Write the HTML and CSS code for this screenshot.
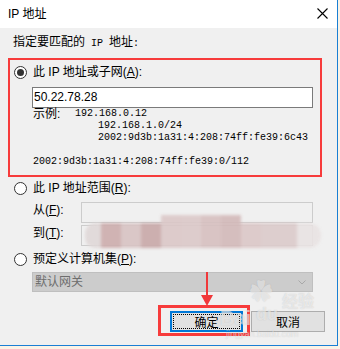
FILE: index.html
```html
<!DOCTYPE html>
<html lang="zh-CN">

<head>
    <meta charset="UTF-8">
    <meta name="viewport" content="width=device-width, initial-scale=1.0">
    <title>IP 地址</title>
    <!-- css -->
    <link rel="stylesheet" href="styles.css">
</head>

<body>
    <div class="dialog">
        <div class="titlebar">
            <span class="title">IP 地址</span>
            <svg class="close" width="11" height="11" viewBox="0 0 11 11">
                <path d="M0.5 0.5 L10.5 10.5 M10.5 0.5 L0.5 10.5" stroke="#000" stroke-width="1.1" fill="none" />
            </svg>
        </div>

        <div class="content">
            <p class="prompt">指定要匹配的<span class="mono"> IP </span>地址<span class="mono">:</span></p>

            <!-- first choice, marked in red -->
            <div class="group marked">
                <div class="option"><span class="radio checked"></span><span>此 IP 地址或子网(<u>A</u>):</span></div>
                <div class="textbox">50.22.78.28</div>
                <div class="examples">
                    <div class="ex-row"><span class="ex-label">示例:</span><span class="mono">192.168.0.12</span></div>
                    <div class="ex-row indent mono">192.168.1.0/24</div>
                    <div class="ex-row indent mono">2002:9d3b:1a31:4:208:74ff:fe39:6c43</div>
                    <div class="ex-row"></div>
                    <div class="ex-row mono">2002:9d3b:1a31:4:208:74ff:fe39:0/112</div>
                </div>
            </div>

            <div class="group">
                <div class="option"><span class="radio"></span><span>此 IP 地址范围(<u>R</u>):</span></div>
                <div class="range-row first">
                    <span class="range-label">从(<u>F</u>):</span>
                    <div class="box"></div>
                </div>
                <div class="range-row">
                    <span class="range-label">到(<u>T</u>):</span>
                    <div class="box"></div>
                    <div class="smudge">
                        <span class="blk b1"></span><span class="blk b2"></span><span class="blk b3"></span>
                        <span class="blk b4"></span><span class="blk b5"></span><span class="blk b6"></span>
                        <span class="blk b7"></span><span class="blk b8"></span><span class="blk b9"></span>
                        <span class="blk b10"></span><span class="blk b11"></span>
                    </div>
                </div>
            </div>

            <div class="group">
                <div class="option"><span class="radio"></span><span>预定义计算机集(<u>P</u>):</span></div>
                <div class="select">
                    <span>默认网关</span>
                    <svg width="8" height="5" viewBox="0 0 8 5">
                        <path d="M0.5 0.5 L4 4 L7.5 0.5" stroke="#a8a8a8" stroke-width="1" fill="none" />
                    </svg>
                </div>
            </div>

            <div class="buttons">
                <div class="btn-wrap">
                    <button class="btn primary"><span class="focus">确定</span></button>
                    <div class="highlight"></div>
                    <svg class="arrow" width="14" height="36" viewBox="0 0 14 36">
                        <rect x="6" y="0" width="2" height="26" fill="#f0383a" />
                        <polygon points="1,23 13,23 7,34" fill="#f0383a" />
                    </svg>
                </div>
                <button class="btn">取消</button>
            </div>
        </div>

        <div class="watermark">
            <span class="wm-bai">Bai</span><span class="wm-paw">&#10047;</span><span class="wm-du">du</span><span class="wm-jy">经验</span>
            <span class="wm-url">jingyan.baidu.com</span>
        </div>
    </div>
</body>

</html>
```

FILE: styles.css
```css
body {
    margin: 0;
    background: #fbf3e6;
    font-family: "Liberation Sans", "Noto Sans CJK SC", sans-serif;
    font-size: 12px;
    color: #000;
}

.dialog {
    position: relative;
    width: 337px;
    height: 345px;
    background: #f0f0f0;
    border-right: 1px solid #1a7fd4;
    border-bottom: 1px solid #1a7fd4;
    overflow: hidden;
}

.titlebar {
    display: flex;
    align-items: center;
    justify-content: space-between;
    height: 28px;
    padding: 0 9px 0 8px;
    background: #fff;
}

.title {
    line-height: 16px;
}

.close {
    margin-top: -1px;
}

.content {
    padding: 6px 11px 0 8px;
}

.mono {
    font-family: "Liberation Mono", monospace;
    font-size: 10px;
}

.prompt {
    margin: 0 0 0 5px;
    line-height: 16px;
}

.group {
    width: 314px;
    box-sizing: border-box;
    border: 2px solid transparent;
    padding: 4px 0 0 4px;
}

.group.marked {
    margin-top: 6px;
    border-color: #f73b3b;
    padding-bottom: 7px;
}

.option {
    display: flex;
    align-items: center;
    gap: 6px;
    line-height: 16px;
}

.option u,
.range-label u {
    text-underline-offset: 1px;
}

.radio {
    width: 11px;
    height: 11px;
    border: 1px solid #333;
    border-radius: 50%;
    background: #fff;
    display: flex;
    align-items: center;
    justify-content: center;
}

.radio.checked::after {
    content: '';
    width: 7px;
    height: 7px;
    border-radius: 50%;
    background: #333;
}

.textbox {
    margin: 7px 0 0 18px;
    width: 281px;
    height: 21px;
    box-sizing: border-box;
    border: 1px solid #7a7a7a;
    background: #fff;
    padding-left: 1px;
    line-height: 19px;
}

.examples {
    margin-left: 19px;
}

.ex-row {
    display: flex;
    align-items: center;
    height: 12px;
    line-height: 12px;
    white-space: pre;
}

.ex-label {
    width: 42px;
}

.ex-row.indent {
    padding-left: 65px;
}

.group + .group {
    padding-top: 1px;
}

.group:last-of-type {
    padding-top: 4px;
}

.range-row {
    position: relative;
    display: flex;
    align-items: flex-start;
    margin: 2px 0 0 19px;
}

.range-row.first {
    margin-top: 6px;
}

.range-label {
    width: 48px;
    line-height: 16px;
}

.box {
    width: 232px;
    height: 21px;
    box-sizing: border-box;
    border: 1px solid #cccccc;
    background: #f0f0f0;
}

.smudge {
    position: absolute;
    left: 52px;
    top: -2px;
    display: flex;
    align-items: flex-end;
    height: 25px;
    filter: blur(1.5px);
    opacity: 0.9;
}

.blk {
    width: 20px;
    height: 25px;
    background: #d8c6c6;
}

.b1 { width: 16px; border-radius: 10px 0 0 10px; background: #e0d8d8; }
.b2 { background: #cdadad; }
.b3 { background: #d8c3c3; }
.b4 { background: #c9a9a9; }
.b5 { background: #dbc7c7; height: 33px; }
.b6 { background: #dcc9c9; height: 33px; }
.b7 { background: #d7c0c0; height: 33px; }
.b8 { background: #d3b9b9; height: 33px; }
.b9 { background: #dcc7c7; }
.b10 { width: 36px; background: #dccbcb; }
.b11 { width: 24px; background: #e9e3e3; border-radius: 0 12px 12px 0; }

.select {
    display: flex;
    align-items: center;
    justify-content: space-between;
    margin: 5px 0 0 18px;
    width: 281px;
    height: 20px;
    box-sizing: border-box;
    border: 1px solid #bfbfbf;
    background: #cccccc;
    color: #6d6d6d;
    padding: 0 6px 0 2px;
    line-height: 18px;
}

.buttons {
    display: flex;
    justify-content: flex-end;
    gap: 8px;
    margin-top: 17px;
    padding-right: 1px;
}

.btn-wrap {
    position: relative;
}

.btn {
    width: 74px;
    height: 21px;
    box-sizing: border-box;
    border: 1px solid #adadad;
    background: #e1e1e1;
    font-family: "Noto Sans CJK SC", sans-serif;
    font-size: 12px;
    color: #000;
    padding: 0;
    line-height: 17px;
}

.btn.primary {
    width: 73px;
    border: 2px solid #0078d7;
    padding: 1px;
    display: flex;
}

.focus {
    flex: 1;
    border: 1px dotted #000;
    line-height: 13px;
}

.highlight {
    position: absolute;
    left: -12px;
    top: -6px;
    width: 92px;
    height: 31px;
    box-sizing: border-box;
    border: 3px solid #f73b3b;
}

.arrow {
    position: absolute;
    left: 30px;
    top: -39px;
}

.watermark {
    position: absolute;
    left: 220px;
    top: 280px;
    width: 110px;
    height: 60px;
    color: rgba(255, 255, 255, 0.55);
    text-shadow: 0 0 1px rgba(120, 120, 120, 0.35);
    font-family: "Liberation Sans", sans-serif;
    font-weight: bold;
}

.watermark span {
    position: absolute;
}

.wm-bai {
    left: 0;
    top: 28px;
    font-size: 20px;
    line-height: 20px;
}

.wm-paw {
    left: 30px;
    top: 0;
    font-size: 22px;
    line-height: 24px;
}

.wm-du {
    left: 36px;
    top: 25px;
    font-size: 18px;
    line-height: 18px;
}

.wm-jy {
    left: 62px;
    top: 12px;
    font-family: "Noto Sans CJK SC", sans-serif;
    font-size: 16px;
    line-height: 16px;
}

.wm-url {
    left: 6px;
    top: 49px;
    font-size: 9px;
    line-height: 10px;
    font-weight: normal;
}
```
